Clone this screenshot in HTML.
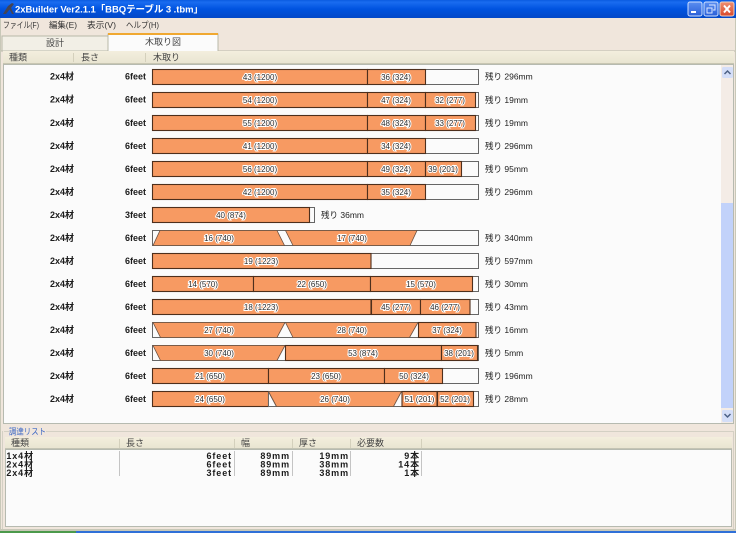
<!DOCTYPE html>
<html><head><meta charset="utf-8">
<style>
html,body{margin:0;padding:0;background:#f0e6dc}
body{width:736px;height:533px;overflow:hidden;position:relative;font-family:"Liberation Sans","Noto Sans CJK JP",sans-serif}
svg{position:absolute;left:0;top:0;filter:blur(.3px)}
text{font-family:"Liberation Sans","Noto Sans CJK JP",sans-serif}
.l text{font-size:8px;fill:#2c2c2c;text-anchor:middle;paint-order:stroke;stroke:#fff;stroke-width:2px}
.k text{font-size:9px;font-weight:bold;fill:#1c1c1c;text-anchor:end}
.r text{font-size:8.5px;fill:#222}
.h text{font-size:9px;fill:#444}
.s{fill:#f79a62;stroke:#4e2f1c;stroke-width:1.100}
.w{fill:#fbfbfb;stroke:#666;stroke-width:1}
.t{fill:#f79a62;stroke:#6a5040;stroke-width:.8}
.d text{font-size:9px;font-weight:bold;fill:#1c1c1c;text-anchor:end;letter-spacing:.9px}
</style></head>
<body>
<svg width="736" height="533" viewBox="0 0 736 533" xmlns="http://www.w3.org/2000/svg">
<defs>
<linearGradient id="tb" x1="0" y1="0" x2="0" y2="1"><stop offset="0" stop-color="#0a5be0"/><stop offset=".12" stop-color="#1a6cf0"/><stop offset=".5" stop-color="#0053e0"/><stop offset="1" stop-color="#0348c8"/></linearGradient>
<linearGradient id="hd" x1="0" y1="0" x2="0" y2="1"><stop offset="0" stop-color="#f3eedd"/><stop offset="1" stop-color="#e8e4d0"/></linearGradient>
<linearGradient id="cl" x1="0" y1="0" x2="0" y2="1"><stop offset="0" stop-color="#f09070"/><stop offset="1" stop-color="#d8482a"/></linearGradient>
<linearGradient id="bt" x1="0" y1="0" x2="0" y2="1"><stop offset="0" stop-color="#5a8ef0"/><stop offset="1" stop-color="#2a5fd8"/></linearGradient>
</defs>
<!-- title bar -->
<rect x="0" y="0" width="736" height="18" fill="url(#tb)"/>
<path d="M3 14 L8 6 L12 3 L14 4 L11 8 L14 14 L12 14 L9.500 9.500 L6 14Z" fill="#445"/>
<text x="15" y="12.500" font-size="9.500" font-weight="bold" fill="#fff" textLength="188" lengthAdjust="spacing">2xBuilder Ver2.1.1「BBQテーブル 3 .tbm」</text>
<rect x="688" y="2" width="14" height="14" rx="2" fill="url(#bt)" stroke="#cfe0ff"/>
<rect x="691" y="11" width="5" height="2" fill="#fff"/>
<rect x="704" y="2" width="14" height="14" rx="2" fill="url(#bt)" stroke="#cfe0ff"/>
<path d="M709 5h6v5h-2M707 8h5v5h-5z" fill="none" stroke="#dde8ff"/>
<rect x="720" y="2" width="14" height="14" rx="2" fill="url(#cl)" stroke="#f0d0c0"/>
<path d="M724 5.500l6 7m0-7l-6 7" stroke="#fff" stroke-width="2"/>
<!-- menu -->
<rect x="0" y="18" width="736" height="14" fill="#f0e6dc"/>
<g font-size="8.500" fill="#333">
<text x="3" y="28" textLength="36" lengthAdjust="spacingAndGlyphs">ファイル(F)</text>
<text x="49" y="28" textLength="28" lengthAdjust="spacingAndGlyphs">編集(E)</text>
<text x="87" y="28" textLength="29" lengthAdjust="spacingAndGlyphs">表示(V)</text>
<text x="126" y="28" textLength="33" lengthAdjust="spacingAndGlyphs">ヘルプ(H)</text>
</g>
<!-- tabs -->
<rect x="2" y="36" width="106" height="15" fill="#f2efe6" stroke="#b8b8a8"/>
<text x="55" y="46" font-size="9" fill="#444" text-anchor="middle">設計</text>
<rect x="108" y="34" width="110" height="17" fill="#fbfbfb" stroke="#b8b8a8"/>
<rect x="108" y="33" width="110" height="2" fill="#f0a830"/>
<text x="163" y="45" font-size="9" fill="#444" text-anchor="middle">木取り図</text>
<rect x="0" y="50.500" width="736" height="1" fill="#b8b8a8"/>
<rect x="108.500" y="50" width="109" height="2" fill="#fbfbfb"/>
<!-- header -->
<rect x="3" y="51" width="731" height="13" fill="url(#hd)"/>
<rect x="3" y="63" width="731" height="1.500" fill="#c8c6b2"/>
<g class="h"><text x="9" y="60.500">種類</text><text x="81" y="60.500">長さ</text><text x="153" y="60.500">木取り</text></g>
<path d="M73.500 53v9M145.500 53v9" stroke="#d4d0bc"/>
<!-- main panel -->
<rect x="3.500" y="64.500" width="730" height="359" fill="#fbfbfb" stroke="#b6bab0"/>
<rect x="721" y="65" width="12" height="358" fill="#f4ece6"/>
<rect x="721" y="203" width="12" height="205" fill="#c2d2fa"/>
<rect x="722" y="67" width="11" height="11" rx="1.500" fill="#d4def8"/>
<path d="M724.500 74l3-3 3 3" fill="none" stroke="#4d6185" stroke-width="1.500"/>
<rect x="722" y="410" width="11" height="12" rx="1.500" fill="#d4def8"/>
<path d="M724.500 414l3 3 3-3" fill="none" stroke="#4d6185" stroke-width="1.500"/>
<!-- left columns -->
<g class="k">
<text x="74" y="79.500">2x4材</text><text x="146" y="79.500">6feet</text>
<text x="74" y="102.500">2x4材</text><text x="146" y="102.500">6feet</text>
<text x="74" y="126">2x4材</text><text x="146" y="126">6feet</text>
<text x="74" y="149">2x4材</text><text x="146" y="149">6feet</text>
<text x="74" y="172">2x4材</text><text x="146" y="172">6feet</text>
<text x="74" y="195">2x4材</text><text x="146" y="195">6feet</text>
<text x="74" y="218">2x4材</text><text x="146" y="218">3feet</text>
<text x="74" y="241">2x4材</text><text x="146" y="241">6feet</text>
<text x="74" y="264">2x4材</text><text x="146" y="264">6feet</text>
<text x="74" y="287">2x4材</text><text x="146" y="287">6feet</text>
<text x="74" y="310">2x4材</text><text x="146" y="310">6feet</text>
<text x="74" y="333">2x4材</text><text x="146" y="333">6feet</text>
<text x="74" y="356">2x4材</text><text x="146" y="356">6feet</text>
<text x="74" y="379">2x4材</text><text x="146" y="379">6feet</text>
<text x="74" y="402">2x4材</text><text x="146" y="402">6feet</text>
</g>
<!-- bars -->
<g transform="translate(0,69.500)"><rect class="w" x="152.500" width="326" height="15"/><rect class="s" x="152.500" width="215" height="15"/><rect class="s" x="367.500" width="58" height="15"/><g class="l"><text x="260" y="10.500">43 (1200)</text><text x="396" y="10.500">36 (324)</text></g></g>
<g transform="translate(0,92.500)"><rect class="w" x="152.500" width="326" height="15"/><rect class="s" x="152.500" width="215" height="15"/><rect class="s" x="367.500" width="58" height="15"/><rect class="s" x="425.500" width="50" height="15"/><g class="l"><text x="260" y="10.500">54 (1200)</text><text x="396" y="10.500">47 (324)</text><text x="450" y="10.500">32 (277)</text></g></g>
<g transform="translate(0,115.500)"><rect class="w" x="152.500" width="326" height="15"/><rect class="s" x="152.500" width="215" height="15"/><rect class="s" x="367.500" width="58" height="15"/><rect class="s" x="425.500" width="50" height="15"/><g class="l"><text x="260" y="10.500">55 (1200)</text><text x="396" y="10.500">48 (324)</text><text x="450" y="10.500">33 (277)</text></g></g>
<g transform="translate(0,138.500)"><rect class="w" x="152.500" width="326" height="15"/><rect class="s" x="152.500" width="215" height="15"/><rect class="s" x="367.500" width="58" height="15"/><g class="l"><text x="260" y="10.500">41 (1200)</text><text x="396" y="10.500">34 (324)</text></g></g>
<g transform="translate(0,161.500)"><rect class="w" x="152.500" width="326" height="15"/><rect class="s" x="152.500" width="215" height="15"/><rect class="s" x="367.500" width="58" height="15"/><rect class="s" x="425.500" width="36" height="15"/><g class="l"><text x="260" y="10.500">56 (1200)</text><text x="396" y="10.500">49 (324)</text><text x="443" y="10.500">39 (201)</text></g></g>
<g transform="translate(0,184.500)"><rect class="w" x="152.500" width="326" height="15"/><rect class="s" x="152.500" width="215" height="15"/><rect class="s" x="367.500" width="58" height="15"/><g class="l"><text x="260" y="10.500">42 (1200)</text><text x="396" y="10.500">35 (324)</text></g></g>
<g transform="translate(0,207.500)"><rect class="w" x="152.500" width="162" height="15"/><rect class="s" x="152.500" width="157" height="15"/><g class="l"><text x="231" y="10.500">40 (874)</text></g></g>
<g transform="translate(0,230.500)"><rect class="w" x="152.500" width="326" height="15"/><path class="t" d="M160 0H277L284.500 15H153Z"/><path class="t" d="M285.500 0H417L410 15H293Z"/><g class="l"><text x="219" y="10.500">16 (740)</text><text x="352" y="10.500">17 (740)</text></g></g>
<g transform="translate(0,253.500)"><rect class="w" x="152.500" width="326" height="15"/><rect class="s" x="152.500" width="218.500" height="15"/><g class="l"><text x="261" y="10.500">19 (1223)</text></g></g>
<g transform="translate(0,276.500)"><rect class="w" x="152.500" width="326" height="15"/><rect class="s" x="152.500" width="101" height="15"/><rect class="s" x="253.500" width="117" height="15"/><rect class="s" x="370.500" width="102" height="15"/><g class="l"><text x="203" y="10.500">14 (570)</text><text x="312" y="10.500">22 (650)</text><text x="421" y="10.500">15 (570)</text></g></g>
<g transform="translate(0,299.500)"><rect class="w" x="152.500" width="326" height="15"/><rect class="s" x="152.500" width="218.500" height="15"/><rect class="s" x="371.500" width="49" height="15"/><rect class="s" x="420.500" width="49.500" height="15"/><g class="l"><text x="261" y="10.500">18 (1223)</text><text x="396" y="10.500">45 (277)</text><text x="445" y="10.500">46 (277)</text></g></g>
<g transform="translate(0,322.500)"><rect class="w" x="152.500" width="326" height="15"/><path class="t" d="M153 0H285L277 15H160.500Z"/><path class="t" d="M285.500 0H418L409.500 15H293Z"/><rect class="s" x="418.500" width="57.500" height="15"/><g class="l"><text x="219" y="10.500">27 (740)</text><text x="352" y="10.500">28 (740)</text><text x="447" y="10.500">37 (324)</text></g></g>
<g transform="translate(0,345.500)"><rect class="w" x="152.500" width="326" height="15"/><path class="t" d="M153 0H285L277 15H160.500Z"/><rect class="s" x="285.500" width="156" height="15"/><rect class="s" x="441.500" width="36" height="15"/><g class="l"><text x="219" y="10.500">30 (740)</text><text x="363" y="10.500">53 (874)</text><text x="459" y="10.500">38 (201)</text></g></g>
<g transform="translate(0,368.500)"><rect class="w" x="152.500" width="326" height="15"/><rect class="s" x="152.500" width="116" height="15"/><rect class="s" x="268.500" width="116" height="15"/><rect class="s" x="384.500" width="58" height="15"/><g class="l"><text x="210" y="10.500">21 (650)</text><text x="326" y="10.500">23 (650)</text><text x="414" y="10.500">50 (324)</text></g></g>
<g transform="translate(0,391.500)"><rect class="w" x="152.500" width="326" height="15"/><rect class="s" x="152.500" width="116" height="15"/><path class="w" d="M268.500 0V15H276.500Z"/><path class="t" d="M268.500 0H401.500L393.500 15H276.500Z"/><rect class="s" x="402" width="35" height="15"/><rect class="s" x="437.500" width="36" height="15"/><g class="l"><text x="210" y="10.500">24 (650)</text><text x="335" y="10.500">26 (740)</text><text x="419.500" y="10.500">51 (201)</text><text x="455" y="10.500">52 (201)</text></g></g>
<!-- remainders -->
<g class="r">
<text x="485" y="79.500">残り 296mm</text>
<text x="485" y="103">残り 19mm</text>
<text x="485" y="126">残り 19mm</text>
<text x="485" y="149">残り 296mm</text>
<text x="485" y="172">残り 95mm</text>
<text x="485" y="195">残り 296mm</text>
<text x="321" y="218">残り 36mm</text>
<text x="485" y="241">残り 340mm</text>
<text x="485" y="264">残り 597mm</text>
<text x="485" y="287">残り 30mm</text>
<text x="485" y="310">残り 43mm</text>
<text x="485" y="333">残り 16mm</text>
<text x="485" y="356">残り 5mm</text>
<text x="485" y="379">残り 196mm</text>
<text x="485" y="402">残り 28mm</text>
</g>
<!-- group box -->
<path d="M4 431.500H9M46 431.500H733.500V530M2.500 431V530H733.500" fill="none" stroke="#d4d0c4"/>
<text x="9" y="434.500" font-size="8.500" fill="#3a66c4" textLength="37" lengthAdjust="spacingAndGlyphs">調達リスト</text>
<rect x="5" y="437" width="727" height="12" fill="url(#hd)"/>
<rect x="5" y="448" width="727" height="1.500" fill="#c4c4b4"/>
<g class="h"><text x="11" y="446">種類</text><text x="126" y="446">長さ</text><text x="241" y="446">幅</text><text x="299" y="446">厚さ</text><text x="357" y="446">必要数</text></g>
<path d="M119.500 439v9M234.500 439v9M292.500 439v9M350.500 439v9M421.500 439v9" stroke="#d4d0bc"/>
<rect x="5.500" y="449.500" width="726" height="77" fill="#fbfbfb" stroke="#b6bab0"/>
<path d="M119.500 451v25M234.500 451v25M292.500 451v25M350.500 451v25M421.500 451v25" stroke="#c4c4c4"/>
<g class="d">
<text x="34" y="459">1x4材</text><text x="232" y="459">6feet</text><text x="290" y="459">89mm</text><text x="349" y="459">19mm</text><text x="420" y="459">9本</text>
<text x="34" y="467.500">2x4材</text><text x="232" y="467.500">6feet</text><text x="290" y="467.500">89mm</text><text x="349" y="467.500">38mm</text><text x="420" y="467.500">14本</text>
<text x="34" y="476">2x4材</text><text x="232" y="476">3feet</text><text x="290" y="476">89mm</text><text x="349" y="476">38mm</text><text x="420" y="476">1本</text>
</g>
<!-- frame and taskbar -->
<path d="M.5 18V530M735.500 18V530" stroke="#c8c8b8"/>
<rect x="0" y="529" width="736" height="2" fill="#c8c8b8"/>
<rect x="0" y="531" width="76" height="2" fill="#4c9a4c"/>
<rect x="76" y="531" width="660" height="2" fill="#2f70d8"/>
</svg>
</body></html>
